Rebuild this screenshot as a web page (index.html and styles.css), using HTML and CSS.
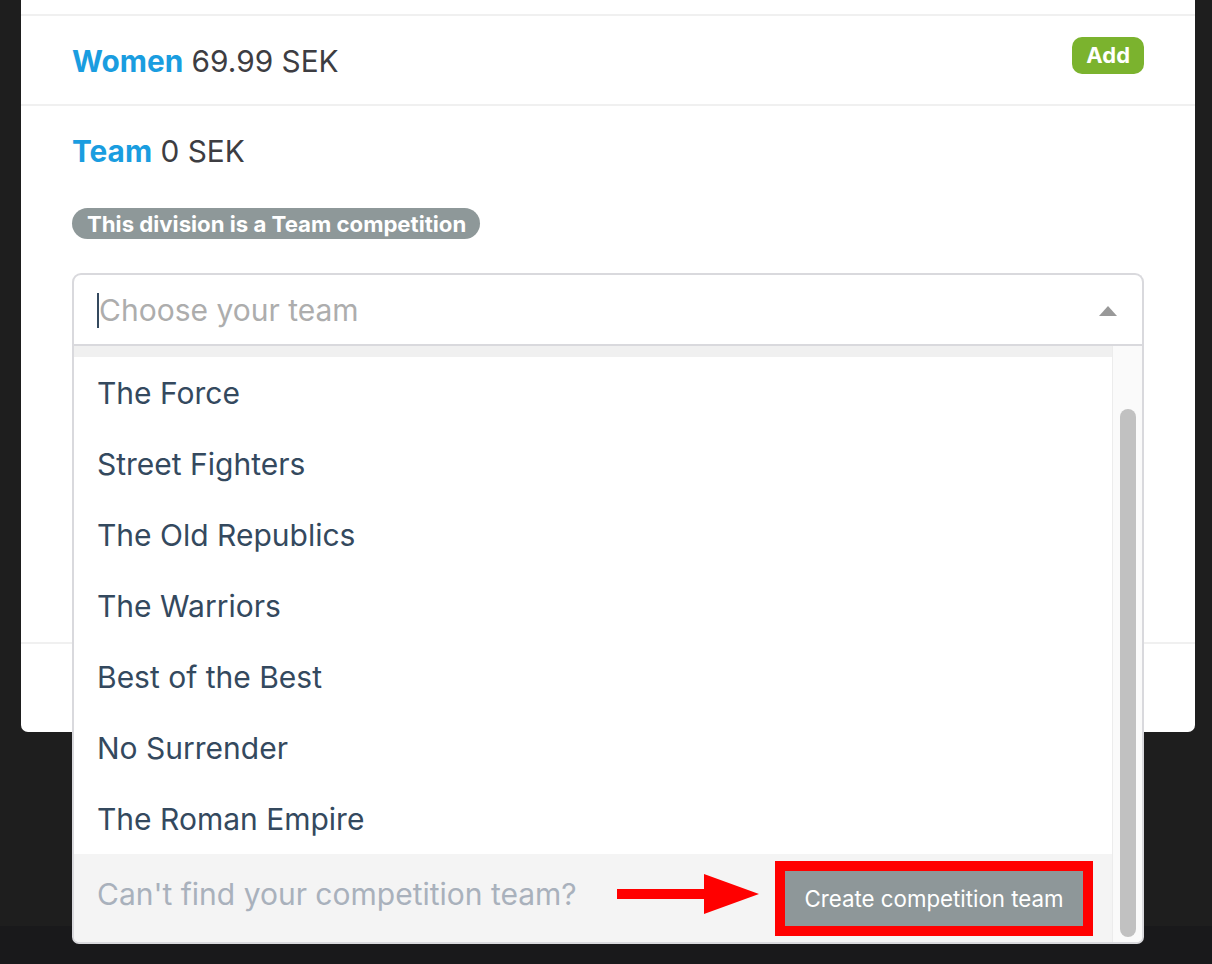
FILE: index.html
```html
<!DOCTYPE html>
<html lang="en">
<head>
<meta charset="utf-8">
<title>Team select</title>
<link rel="stylesheet" href="styles.css">
</head>
<body>
<div class="modal">
  <div class="row-prev"></div>
  <div class="row-women">
    <div class="title"><span class="name">Women</span> <span class="price">69.99 SEK</span></div>
    <button class="add">Add</button>
  </div>
  <div class="team-section">
    <div class="title"><span class="name">Team</span> <span class="price">0 SEK</span></div>
    <div class="badge-wrap"><span class="badge">This division is a Team competition</span></div>
    <div class="select">
      <div class="input"><span class="caret"></span><span class="placeholder">Choose your team</span></div>
      <span class="tri"></span>
      <div class="dropdown">
        <div class="list-col">
          <div class="strip"></div>
          <div class="item">The Force</div>
          <div class="item">Street Fighters</div>
          <div class="item">The Old Republics</div>
          <div class="item">The Warriors</div>
          <div class="item">Best of the Best</div>
          <div class="item">No Surrender</div>
          <div class="item">The Roman Empire</div>
          <div class="foot">
            <span class="hint">Can't find your competition team?</span>
            <svg class="arrow" width="142" height="40" viewBox="0 0 142 40"><rect x="0" y="15" width="88" height="10" fill="#ff0000"/><polygon points="87,0 142,20 87,40" fill="#ff0000"/></svg>
            <div class="redbox"><button class="create">Create competition team</button></div>
          </div>
        </div>
        <div class="track"><div class="thumb"></div></div>
      </div>
    </div>
  </div>
  <div class="modal-foot"></div>
</div>
</body>
</html>
```
FILE: styles.css
```css
* { box-sizing: border-box; }
html, body { margin: 0; padding: 0; }
body {
  width: 1212px;
  height: 964px;
  overflow: hidden;
  background: linear-gradient(to bottom, #1e1e1e 0, #1e1e1e 926px, #19191b 926px, #19191b 100%);
  font-family: Inter, "Noto Sans", sans-serif;
}
.modal {
  margin-left: 21px;
  width: 1174px;
  height: 732px;
  background: #fff;
  border-radius: 0 0 7px 7px;
}
.row-prev {
  height: 16px;
  border-bottom: 2px solid #f0f0f0;
}
.row-women {
  height: 90px;
  border-bottom: 2px solid #f0f0f0;
  padding: 0 51px 0 51px;
  display: flex;
  align-items: center;
  justify-content: space-between;
}
.row-women .title { margin-top: 2px; }
.title {
  font-size: 29.8px;
  line-height: 34px;
  color: #3d3d42;
}
.name { color: #1a9de0; font-weight: 700; }
.add {
  border: none;
  background: #7bb32e;
  color: #fff;
  font-family: inherit;
  font-weight: 700;
  font-size: 22px;
  line-height: 26px;
  padding: 5px 14px 6px;
  border-radius: 10px;
  margin-top: -10px;
}
.team-section {
  height: 538px;
  border-bottom: 2px solid #f0f0f0;
  padding: 28px 51px 0 51px;
}
.badge-wrap { margin-top: 40px; height: 31px; }
.badge {
  display: inline-block;
  background: #8e9899;
  color: #fff;
  font-weight: 700;
  font-size: 22.2px;
  line-height: 31px;
  height: 31px;
  padding: 0 14px 0 15px;
  border-radius: 16px;
}
.select {
  position: relative;
  margin-top: 34px;
  height: 71px;
  border: 2px solid #d9d9dd;
  border-bottom: none;
  border-radius: 9px 9px 0 0;
  display: flex;
  align-items: center;
  padding: 0 25px 0 23px;
}
.input {
  flex: 1;
  display: flex;
  align-items: center;
  margin-top: 2px;
}
.caret {
  width: 2px;
  height: 35px;
  background: #34495e;
}
.placeholder {
  font-size: 30px;
  color: #adadad;
  line-height: 35px;
}
.tri {
  width: 0;
  height: 0;
  border-left: 9px solid transparent;
  border-right: 9px solid transparent;
  border-bottom: 10px solid #999;
  margin-top: 2px;
}
.dropdown {
  position: absolute;
  top: 100%;
  left: -2px;
  right: -2px;
  height: 600px;
  border: 2px solid #d9d9dd;
  border-radius: 0 0 7px 7px;
  background: #fff;
  display: flex;
  overflow: hidden;
}
.list-col {
  flex: 1;
  display: flex;
  flex-direction: column;
}
.strip { height: 11px; background: #f0f0f0; }
.item {
  height: 71px;
  padding-left: 23px;
  display: flex;
  align-items: center;
  font-size: 30px;
  color: #34495e;
}
.foot {
  height: 88px;
  background: #f4f4f4;
  display: flex;
  align-items: center;
  padding: 0 19px 0 23px;
}
.hint {
  font-size: 30px;
  color: #a9b1bc;
  margin-top: -8px;
}
.arrow { margin-left: auto; margin-top: -9px; }
.redbox {
  margin-left: 16px;
  border: 10px solid #ff0000;
  width: 318px;
  height: 75px;
  display: flex;
}
.create {
  flex: 1;
  border: none;
  background: #8e9799;
  color: #fff;
  font-family: inherit;
  font-size: 22.3px;
  padding: 0;
  margin: 0;
}
.track {
  width: 30px;
  background: #fafafa;
  border-left: 1px solid #ececec;
  padding: 63px 0 0 7px;
}
.thumb {
  width: 16px;
  height: 528px;
  background: #c1c1c1;
  border-radius: 8px;
}
.modal-foot { height: 88px; }
```
